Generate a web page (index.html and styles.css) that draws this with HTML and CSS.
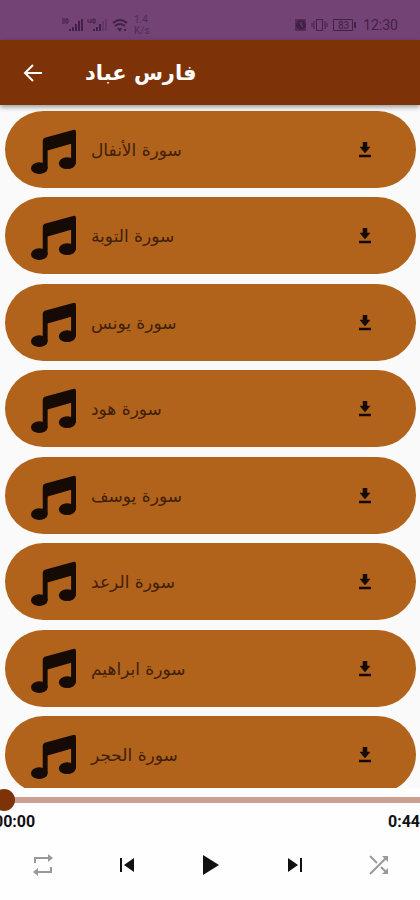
FILE: index.html
```html
<!DOCTYPE html>
<html lang="ar">
<head>
    <meta charset="UTF-8">
    <meta name="viewport" content="width=device-width, initial-scale=1.0">
    <title>فارس عباد</title>
    <link rel="stylesheet" href="styles.css">
</head>
<body>
    <!-- Shared icons -->
    <svg class="sprite" aria-hidden="true">
        <symbol id="note" viewBox="0 0 46 46">
            <path d="M12 12Q12 10 14 9L43 1Q46 0 46 3V36H41V15L17 22V40H12Z"/>
            <ellipse cx="8.500" cy="40" rx="8.500" ry="6"/>
            <ellipse cx="37" cy="35" rx="8.500" ry="6"/>
        </symbol>
        <symbol id="download" viewBox="0 0 12 16">
            <path d="M4 0h4v5h3L6 11 1 5h3zM0 13h12v2H0z" stroke="currentColor" stroke-width=".5"/>
        </symbol>
    </svg>

    <div class="status">
        <div class="status-group">
            <svg width="66" height="16" viewBox="0 0 66 16" aria-hidden="true">
                <path d="M0 2h3M0 4h3M0 6h3M4 2h2v4h-2z M26 2v3h3M29 2v4M31 2h2v4h-2z" fill="none" stroke="currentColor"/>
                <path d="M7 12h2v2H7zM10 10h2v4h-2zM13 7h2v7h-2zM16 4h2v10h-2zM19 2h2v12h-2zM31 12h2v2h-2zM34 10h2v4h-2zM37 7h2v7h-2z"/>
                <path d="M40 4h2v10h-2zM43 2h2v12h-2z" opacity=".3"/>
                <path d="M51 6q7-6 14 0M53 9q5-4 10 0" fill="none" stroke="currentColor" stroke-width="2"/>
                <path d="M55 11h5l-2 4zM62 12h2v2h-2z"/>
            </svg>
            <span class="speed">1.4<br>K/s</span>
        </div>
        <div class="status-group">
            <svg width="62" height="14" viewBox="0 0 62 14" aria-hidden="true">
                <path d="M0 1h11v12H0z" opacity=".6"/>
                <circle cx="6" cy="7" r="5"/>
                <path d="M6 4v3l2 2" fill="none" stroke="#734375"/>
                <path d="M21.500 1.500h6v11h-6zM19 3v8M30 3v8M17 5v4M32 5v4M38.500 1.500h19v11h-19z" fill="none" stroke="currentColor"/>
                <path d="M59 4h2v6h-2z"/>
                <text x="43" y="11" font-size="10">83</text>
            </svg>
            <span class="clock">12:30</span>
        </div>
    </div>

    <header class="topbar">
        <button class="icon-btn" type="button" aria-label="رجوع">
            <svg width="20" height="20" viewBox="0 0 20 20"><path d="M19 10H2M10 2L2 10l8 8" fill="none" stroke="currentColor" stroke-width="2"/></svg>
        </button>
        <h1 dir="rtl">فارس عباد</h1>
    </header>

    <ul class="list">
        <li class="card"><svg class="note"><use href="#note"/></svg><span class="name" dir="rtl">سورة الأنفال</span><button class="icon-btn" type="button" aria-label="تحميل"><svg width="12" height="16"><use href="#download"/></svg></button></li>
        <li class="card"><svg class="note"><use href="#note"/></svg><span class="name" dir="rtl">سورة التوبة</span><button class="icon-btn" type="button" aria-label="تحميل"><svg width="12" height="16"><use href="#download"/></svg></button></li>
        <li class="card"><svg class="note"><use href="#note"/></svg><span class="name" dir="rtl">سورة يونس</span><button class="icon-btn" type="button" aria-label="تحميل"><svg width="12" height="16"><use href="#download"/></svg></button></li>
        <li class="card"><svg class="note"><use href="#note"/></svg><span class="name" dir="rtl">سورة هود</span><button class="icon-btn" type="button" aria-label="تحميل"><svg width="12" height="16"><use href="#download"/></svg></button></li>
        <li class="card"><svg class="note"><use href="#note"/></svg><span class="name" dir="rtl">سورة يوسف</span><button class="icon-btn" type="button" aria-label="تحميل"><svg width="12" height="16"><use href="#download"/></svg></button></li>
        <li class="card"><svg class="note"><use href="#note"/></svg><span class="name" dir="rtl">سورة الرعد</span><button class="icon-btn" type="button" aria-label="تحميل"><svg width="12" height="16"><use href="#download"/></svg></button></li>
        <li class="card"><svg class="note"><use href="#note"/></svg><span class="name" dir="rtl">سورة ابراهيم</span><button class="icon-btn" type="button" aria-label="تحميل"><svg width="12" height="16"><use href="#download"/></svg></button></li>
        <li class="card"><svg class="note"><use href="#note"/></svg><span class="name" dir="rtl">سورة الحجر</span><button class="icon-btn" type="button" aria-label="تحميل"><svg width="12" height="16"><use href="#download"/></svg></button></li>
    </ul>

    <footer class="player">
        <input class="seek" type="range" min="0" max="44" value="0" aria-label="موضع التشغيل">
        <div class="times"><span>00:00</span><span>0:44</span></div>
        <div class="controls">
            <button class="icon-btn muted" type="button" aria-label="تكرار">
                <svg width="20" height="22" viewBox="0 0 20 22"><path d="M2 9V4h14M18 13v5H4" fill="none" stroke="currentColor" stroke-width="2"/><path d="M15 0l5 4-5 4zM5 14l-5 4 5 4z"/></svg>
            </button>
            <button class="icon-btn" type="button" aria-label="السابق">
                <svg width="14" height="14" viewBox="0 0 14 14"><path d="M0 0h2v14H0zM14 0v14L4 7z"/></svg>
            </button>
            <button class="icon-btn" type="button" aria-label="تشغيل">
                <svg width="16" height="22" viewBox="0 0 16 22"><path d="M0 1l16 10L0 21z"/></svg>
            </button>
            <button class="icon-btn" type="button" aria-label="التالي">
                <svg width="14" height="14" viewBox="0 0 14 14"><path d="M12 0h2v14h-2zM0 0v14l10-7z"/></svg>
            </button>
            <button class="icon-btn muted" type="button" aria-label="عشوائي">
                <svg width="20" height="20" viewBox="0 0 20 20"><path d="M1 19L17 3M1 1l7 7M12 12l5 5" fill="none" stroke="currentColor" stroke-width="2"/><path d="M13 1h6v6zM19 13v6h-6z"/></svg>
            </button>
        </div>
    </footer>
</body>
</html>
```
FILE: styles.css
```css
* {
    box-sizing: border-box;
}
body {
    margin: 0;
    height: 100vh;
    display: flex;
    flex-direction: column;
    overflow: hidden;
    font-family: "DejaVu Sans", sans-serif;
    background-color: #fefefe;
    color: #111;
}
svg {
    display: block;
    fill: currentColor;
}
.sprite {
    position: absolute;
    width: 0;
    height: 0;
}
.status {
    display: flex;
    justify-content: space-between;
    align-items: center;
    flex: none;
    height: 40px;
    padding: 10px 22px 0 62px;
    background-color: #734375;
    color: #432047;
    font-family: Roboto, sans-serif;
}
.status-group {
    display: flex;
    align-items: center;
    gap: 6px;
}
.speed {
    font-size: 10px;
    line-height: 11px;
    opacity: 0.7;
}
.clock {
    font-size: 14px;
}
.topbar {
    display: flex;
    align-items: center;
    flex: none;
    gap: 29px;
    height: 65px;
    padding: 0 10px;
    background-color: #7d3207;
    color: #fff;
    box-shadow: 0 2px 5px rgba(0, 0, 0, 0.4);
    z-index: 1;
}
h1 {
    margin: 0;
    font-size: 21px;
    line-height: 32px;
}
.icon-btn {
    display: flex;
    justify-content: center;
    align-items: center;
    width: 46px;
    height: 46px;
    padding: 0;
    border: none;
    background: none;
    color: inherit;
    cursor: pointer;
}
.list {
    flex: 1;
    min-height: 0;
    overflow: hidden;
    margin: 0;
    padding: 6px 4px 0 5px;
    list-style: none;
    background-color: #fafafa;
}
.card {
    display: flex;
    align-items: center;
    height: 77px;
    margin-bottom: 9px;
    padding: 0 28px 0 26px;
    border-radius: 39px;
    background-color: #b2631b;
    color: #160a04;
}
.card:nth-child(even) {
    margin-bottom: 10px;
}
.note {
    width: 45px;
    height: 45px;
    margin-top: 4px;
}
.name {
    margin-left: 15px;
    margin-right: auto;
    font-size: 17px;
    line-height: 28px;
    color: #40200a;
}
.player {
    flex: none;
    height: 112px;
}
.seek {
    appearance: none;
    display: block;
    width: calc(100% + 14px);
    height: 24px;
    margin: 0 -7px;
    background: none;
}
.seek::-webkit-slider-runnable-track {
    height: 6px;
    background-color: #cda094;
}
.seek::-webkit-slider-thumb {
    appearance: none;
    width: 22px;
    height: 22px;
    margin-top: -8px;
    border-radius: 50%;
    background-color: #7d3207;
}
.times {
    display: flex;
    justify-content: space-between;
    margin: 0 0 0 -6px;
    font-family: Roboto, sans-serif;
    font-size: 16px;
    font-weight: bold;
    line-height: 20px;
}
.controls {
    display: flex;
    justify-content: space-between;
    padding: 10px 18px 10px 20px;
}
.muted {
    color: #999;
}
```
